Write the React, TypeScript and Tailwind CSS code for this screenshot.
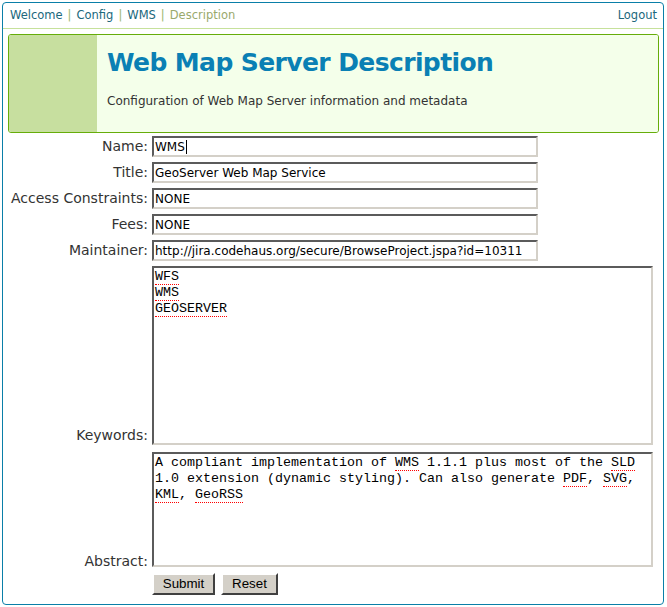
type Field = { label: string; value: string; caret?: boolean }

const FIELDS: Field[] = [
  { label: 'Name:', value: 'WMS', caret: true },
  { label: 'Title:', value: 'GeoServer Web Map Service' },
  { label: 'Access Constraints:', value: 'NONE' },
  { label: 'Fees:', value: 'NONE' },
  { label: 'Maintainer:', value: 'http://jira.codehaus.org/secure/BrowseProject.jspa?id=10311' },
]

const sans = "font-['DejaVu_Sans',Verdana,sans-serif]"

// red dotted "spelling" marks, as the browser draws them in a textarea
function Sp({ children }: { children: string }) {
  return (
    <span className="inline-block leading-[15px] border-b border-dotted border-[#ff0000]">{children}</span>
  )
}

const inset =
  'border-2 border-t-[#5b5b5b] border-l-[#5b5b5b] border-r-[#d4d0c8] border-b-[#d4d0c8] bg-white'

function Button({ children, w }: { children: string; w: string }) {
  return (
    <button
      className={`${w} h-[22px] bg-[#d4d0c8] border-2 border-t-white border-l-white border-r-[#404040] border-b-[#404040] text-[13.33px] leading-none text-black font-['Liberation_Sans',Arial,sans-serif]`}
    >
      {children}
    </button>
  )
}

export default function App() {
  return (
    <div className={`min-h-[607px] bg-white p-[2px] ${sans}`}>
      <div className="w-[662px] h-[603px] border border-[#0a7fa8] rounded-[4px] flex flex-col">
        <div className="h-[26px] flex items-center justify-between pl-[7px] pr-[6px] border-b border-[#c6e19b] text-[11.5px] text-[#20687c]">
          <div className="flex items-center">
            <span>Welcome</span>
            <span className="mx-[5px] text-[#9cb86c]">|</span>
            <span>Config</span>
            <span className="mx-[5px] text-[#9cb86c]">|</span>
            <span>WMS</span>
            <span className="mx-[5px] text-[#9cb86c]">|</span>
            <span className="text-[#9aa96c]">Description</span>
          </div>
          <span>Logout</span>
        </div>

        <div className="mt-[5px] ml-[5px] mr-[4px] h-[99px] border border-[#66ad0a] rounded-[3px] flex overflow-hidden">
          <div className="w-[88px] bg-[#c7df9f]" />
          <div className="flex-1 bg-[#f4ffea] pl-[10px] pt-[12px]">
            <h1 className="text-[25px] leading-[32px] tracking-[-0.6px] font-bold text-[#0a80b4]">Web Map Server Description</h1>
            <p className="mt-[14px] text-[12px] leading-[16px] text-[#333]">
              Configuration of Web Map Server information and metadata
            </p>
          </div>
        </div>

        <form className="mt-[3px] flex flex-col text-[#333]" onSubmit={e => e.preventDefault()}>
          <div className="flex flex-col gap-[5px]">
            {FIELDS.map(f => (
              <div key={f.label} className="flex items-center">
                <label className="w-[145px] text-right text-[14px] leading-[17px]">{f.label}</label>
                <div className={`ml-[4px] w-[386px] h-[21px] ${inset} pl-[1px] flex items-center text-[12px] text-black whitespace-nowrap overflow-hidden`}>
                  {f.value}
                  {f.caret && <span className="ml-[1px] w-px h-[14px] bg-black" />}
                </div>
              </div>
            ))}
          </div>

          <div className="mt-[5px] flex items-end">
            <label className="w-[145px] text-right text-[14px] leading-[17px] pb-[1px]">Keywords:</label>
            <div className={`ml-[4px] w-[501px] h-[179px] ${inset} px-px pt-px font-['Liberation_Mono','Courier_New',monospace] text-[13.33px] leading-[16px] text-black`}>
              <div><Sp>WFS</Sp></div>
              <div><Sp>WMS</Sp></div>
              <div><Sp>GEOSERVER</Sp></div>
            </div>
          </div>

          <div className="mt-[7px] flex items-end">
            <label className="w-[145px] text-right text-[14px] leading-[17px] -mb-[3px]">Abstract:</label>
            <div className={`ml-[4px] w-[501px] h-[115px] ${inset} px-px pt-px font-['Liberation_Mono','Courier_New',monospace] text-[13.33px] leading-[16px] text-black`}>
              A compliant implementation of <Sp>WMS</Sp> 1.1.1 plus most of the <Sp>SLD</Sp> 1.0
              extension (dynamic styling). Can also generate <Sp>PDF</Sp>, <Sp>SVG</Sp>, <Sp>KML</Sp>,{' '}
              <Sp>GeoRSS</Sp>
            </div>
          </div>

          <div className="mt-[6px] ml-[149px] flex gap-[6px]">
            <Button w="w-[63px]">Submit</Button>
            <Button w="w-[57px]">Reset</Button>
          </div>
        </form>
      </div>
    </div>
  )
}
